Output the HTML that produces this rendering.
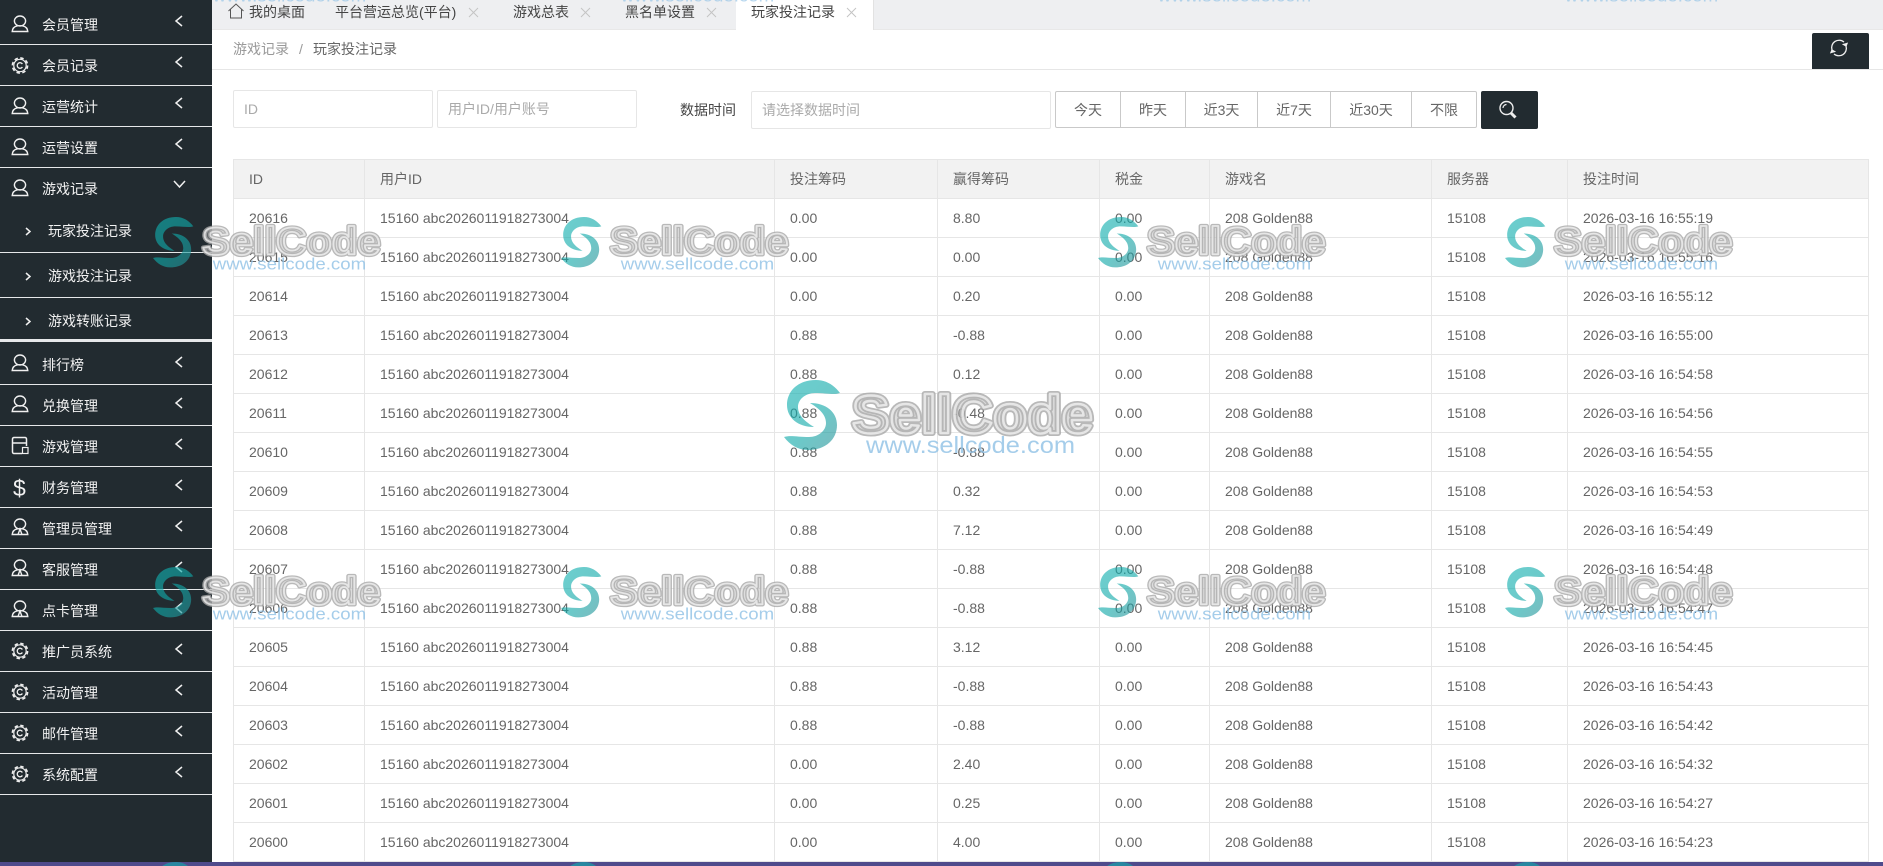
<!DOCTYPE html>
<html lang="zh">
<head>
<meta charset="utf-8">
<title>玩家投注记录</title>
<style>
html,body{margin:0;padding:0;width:1883px;height:866px;overflow:hidden;background:#fff}
body{position:relative;font:14px/20px "Liberation Sans","Noto Sans CJK SC",sans-serif;color:#666}
.a,.t{position:absolute}
.t{white-space:nowrap;line-height:20px}
#side{position:absolute;left:0;top:0;width:212px;height:862px;background:#222b30;color:#f2f2f2;overflow:hidden}
#side i{position:absolute;left:0;width:212px;height:1px;background:#e6e8e9}
#side svg{position:absolute;left:0;top:0}
#tabs{position:absolute;left:212px;top:0;width:1671px;height:29px;background:#eeeff1;border-bottom:1px solid #e8e8e8}
.box{position:absolute;box-sizing:border-box;border:1px solid #e6e6e6;border-radius:2px;color:#aaa;padding-left:10px}
.dark{position:absolute;background:#222b30;border-radius:2px}
#btns{position:absolute;left:1055px;top:91px;height:37px;width:422px;box-sizing:border-box;border:1px solid #c9c9c9;border-radius:2px}
#btns span{position:absolute;top:0;height:35px;line-height:36px;text-align:center;color:#666;border-right:1px solid #c9c9c9;box-sizing:border-box}
table{position:absolute;left:233px;top:159px;width:1636px;border-collapse:collapse;table-layout:fixed}
th,td{border:1px solid #e6e6e6;box-sizing:border-box;height:39px;padding:0 0 0 15px;text-align:left;font-weight:400;color:#666;white-space:nowrap;overflow:hidden}
th{background:#f2f2f2}
#bar{position:absolute;left:0;top:862px;width:1883px;height:4px;background:#4f4b8c}
#wm{position:absolute;left:0;top:0;pointer-events:none}
.s{fill:url(#g);opacity:.62}
.o{font:700 54px "Liberation Sans",sans-serif;fill:none;stroke:#a8a8a8;stroke-width:6;stroke-linejoin:round;opacity:.8}
.n{font:700 54px "Liberation Sans",sans-serif;fill:#b4b4b4;fill-opacity:.45;stroke:#fff;stroke-opacity:.65;stroke-width:2.400;stroke-linejoin:round}
.u{font:400 23px "Liberation Sans",sans-serif;fill:#8fc1e6;opacity:.8}
</style>
</head>
<body>

<div id="tabs"></div>
<div class="a" style="left:736px;top:0;width:138px;height:30px;background:#fff;border-right:1px solid #e2e2e2;box-sizing:border-box"></div>
<svg class="a" style="left:227px;top:3px" width="18" height="16" viewBox="0 0 18 16"><path d="M1.500 8 9 1l7.500 7M3.500 6.500V15h11V6.500" fill="none" stroke="#555" stroke-width="1"/></svg>
<div class="t" style="left:249px;top:2px;color:#444">我的桌面</div>
<div class="t" style="left:335px;top:2px;color:#444">平台营运总览(平台)</div>
<div class="t" style="left:513px;top:2px;color:#444">游戏总表</div>
<div class="t" style="left:625px;top:2px;color:#444">黑名单设置</div>
<div class="t" style="left:751px;top:2px;color:#444">玩家投注记录</div>
<svg class="a" style="left:0;top:0" width="1883" height="29" fill="none" stroke="#c4c4c4" stroke-width="1">
<path d="M469 8l9 9M478 8l-9 9M581 8l9 9M590 8l-9 9M707 8l9 9M716 8l-9 9M847 8l9 9M856 8l-9 9"/>
</svg>

<div class="t" style="left:233px;top:39px;color:#999">游戏记录</div>
<div class="t" style="left:299px;top:39px;color:#999">/</div>
<div class="t" style="left:313px;top:39px">玩家投注记录</div>
<div class="a" style="left:212px;top:69px;width:1671px;height:1px;background:#e6e6e6"></div>
<div class="dark" style="left:1812px;top:33px;width:57px;height:36px;border-radius:2px 2px 0 0"></div>
<svg class="a" style="left:1828px;top:37px" width="22" height="22" fill="none" stroke="#eee" stroke-width="1.300"><path d="M4 13A7.500 7.500 0 0 1 16 5M18 9A7.500 7.500 0 0 1 6 17"/><path d="M18 9l-2.500-1.500 3.500-1zM4 13l2.500 1.500-3.500 1z" fill="#eee"/></svg>

<div class="box" style="left:233px;top:90px;width:200px;height:38px;line-height:36px">ID</div>
<div class="box" style="left:437px;top:90px;width:200px;height:38px;line-height:36px">用户ID/用户账号</div>
<div class="t" style="left:680px;top:100px;color:#444">数据时间</div>
<div class="box" style="left:751px;top:91px;width:300px;height:38px;line-height:36px">请选择数据时间</div>
<div id="btns">
<span style="left:0;width:65px">今天</span>
<span style="left:65px;width:65px">昨天</span>
<span style="left:130px;width:72px">近3天</span>
<span style="left:202px;width:73px">近7天</span>
<span style="left:275px;width:81px">近30天</span>
<span style="left:356px;width:64px;border-right:0">不限</span>
</div>
<div class="dark" style="left:1481px;top:91px;width:57px;height:38px"></div>
<svg class="a" style="left:1498px;top:100px" width="22" height="20" fill="none" stroke="#eee"><circle cx="8.500" cy="8" r="6.500" stroke-width="1.400"/><path d="M13 13l4.500 4.500" stroke-width="3"/><path d="M8.500 4.500a3.500 3.500 0 0 0-3.500 3.500" stroke-width="1.200"/></svg>

<table>
<colgroup><col style="width:131px"><col style="width:410px"><col style="width:163px"><col style="width:162px"><col style="width:110px"><col style="width:222px"><col style="width:136px"><col></colgroup>
<tr><th>ID</th><th>用户ID</th><th>投注筹码</th><th>赢得筹码</th><th>税金</th><th>游戏名</th><th>服务器</th><th>投注时间</th></tr>
<tr><td>20616</td><td>15160 abc2026011918273004</td><td>0.00</td><td>8.80</td><td>0.00</td><td>208 Golden88</td><td>15108</td><td>2026-03-16 16:55:19</td></tr>
<tr><td>20615</td><td>15160 abc2026011918273004</td><td>0.00</td><td>0.00</td><td>0.00</td><td>208 Golden88</td><td>15108</td><td>2026-03-16 16:55:16</td></tr>
<tr><td>20614</td><td>15160 abc2026011918273004</td><td>0.00</td><td>0.20</td><td>0.00</td><td>208 Golden88</td><td>15108</td><td>2026-03-16 16:55:12</td></tr>
<tr><td>20613</td><td>15160 abc2026011918273004</td><td>0.88</td><td>-0.88</td><td>0.00</td><td>208 Golden88</td><td>15108</td><td>2026-03-16 16:55:00</td></tr>
<tr><td>20612</td><td>15160 abc2026011918273004</td><td>0.88</td><td>0.12</td><td>0.00</td><td>208 Golden88</td><td>15108</td><td>2026-03-16 16:54:58</td></tr>
<tr><td>20611</td><td>15160 abc2026011918273004</td><td>0.88</td><td>-0.48</td><td>0.00</td><td>208 Golden88</td><td>15108</td><td>2026-03-16 16:54:56</td></tr>
<tr><td>20610</td><td>15160 abc2026011918273004</td><td>0.88</td><td>-0.88</td><td>0.00</td><td>208 Golden88</td><td>15108</td><td>2026-03-16 16:54:55</td></tr>
<tr><td>20609</td><td>15160 abc2026011918273004</td><td>0.88</td><td>0.32</td><td>0.00</td><td>208 Golden88</td><td>15108</td><td>2026-03-16 16:54:53</td></tr>
<tr><td>20608</td><td>15160 abc2026011918273004</td><td>0.88</td><td>7.12</td><td>0.00</td><td>208 Golden88</td><td>15108</td><td>2026-03-16 16:54:49</td></tr>
<tr><td>20607</td><td>15160 abc2026011918273004</td><td>0.88</td><td>-0.88</td><td>0.00</td><td>208 Golden88</td><td>15108</td><td>2026-03-16 16:54:48</td></tr>
<tr><td>20606</td><td>15160 abc2026011918273004</td><td>0.88</td><td>-0.88</td><td>0.00</td><td>208 Golden88</td><td>15108</td><td>2026-03-16 16:54:47</td></tr>
<tr><td>20605</td><td>15160 abc2026011918273004</td><td>0.88</td><td>3.12</td><td>0.00</td><td>208 Golden88</td><td>15108</td><td>2026-03-16 16:54:45</td></tr>
<tr><td>20604</td><td>15160 abc2026011918273004</td><td>0.88</td><td>-0.88</td><td>0.00</td><td>208 Golden88</td><td>15108</td><td>2026-03-16 16:54:43</td></tr>
<tr><td>20603</td><td>15160 abc2026011918273004</td><td>0.88</td><td>-0.88</td><td>0.00</td><td>208 Golden88</td><td>15108</td><td>2026-03-16 16:54:42</td></tr>
<tr><td>20602</td><td>15160 abc2026011918273004</td><td>0.00</td><td>2.40</td><td>0.00</td><td>208 Golden88</td><td>15108</td><td>2026-03-16 16:54:32</td></tr>
<tr><td>20601</td><td>15160 abc2026011918273004</td><td>0.00</td><td>0.25</td><td>0.00</td><td>208 Golden88</td><td>15108</td><td>2026-03-16 16:54:27</td></tr>
<tr><td>20600</td><td>15160 abc2026011918273004</td><td>0.00</td><td>4.00</td><td>0.00</td><td>208 Golden88</td><td>15108</td><td>2026-03-16 16:54:23</td></tr>
</table>

<div id="side">
<i style="top:44px"></i><i style="top:85px"></i><i style="top:126px"></i><i style="top:167px"></i><i style="top:252px"></i><i style="top:297px"></i><i style="top:339px;height:3px"></i><i style="top:384px"></i><i style="top:425px"></i><i style="top:466px"></i><i style="top:507px"></i><i style="top:548px"></i><i style="top:589px"></i><i style="top:630px"></i><i style="top:671px"></i><i style="top:712px"></i><i style="top:753px"></i><i style="top:794px"></i>

<div class="t" style="left:42px;top:15px">会员管理</div>
<div class="t" style="left:42px;top:56px">会员记录</div>
<div class="t" style="left:42px;top:97px">运营统计</div>
<div class="t" style="left:42px;top:138px">运营设置</div>
<div class="t" style="left:42px;top:179px">游戏记录</div>
<div class="t" style="left:48px;top:221px">玩家投注记录</div>
<div class="t" style="left:48px;top:266px">游戏投注记录</div>
<div class="t" style="left:48px;top:311px">游戏转账记录</div>
<div class="t" style="left:42px;top:355px">排行榜</div>
<div class="t" style="left:42px;top:396px">兑换管理</div>
<div class="t" style="left:42px;top:437px">游戏管理</div>
<div class="t" style="left:42px;top:478px">财务管理</div>
<div class="t" style="left:42px;top:519px">管理员管理</div>
<div class="t" style="left:42px;top:560px">客服管理</div>
<div class="t" style="left:42px;top:601px">点卡管理</div>
<div class="t" style="left:42px;top:642px">推广员系统</div>
<div class="t" style="left:42px;top:683px">活动管理</div>
<div class="t" style="left:42px;top:724px">邮件管理</div>
<div class="t" style="left:42px;top:765px">系统配置</div>
<div class="t" style="left:13px;top:476px;font-size:23px;line-height:24px;color:#f2f2f2">$</div>

<svg width="212" height="862" fill="none" stroke="#f0f0f0" stroke-width="1.500">
<!-- chevrons -->
<path d="M182 16l-6 5 6 5M182 57l-6 5 6 5M182 98l-6 5 6 5M182 139l-6 5 6 5M182 357l-6 5 6 5M182 398l-6 5 6 5M182 439l-6 5 6 5M182 480l-6 5 6 5M182 521l-6 5 6 5M182 562l-6 5 6 5M182 603l-6 5 6 5M182 644l-6 5 6 5M182 685l-6 5 6 5M182 726l-6 5 6 5M182 767l-6 5 6 5"/>
<path d="M174 181l5.500 6 5.500-6"/>
<path d="M26 228l4 3.500-4 3.500M26 273l4 3.500-4 3.500M26 318l4 3.500-4 3.500"/>
<!-- person icons -->
<g stroke-width="1.400">
<g><ellipse cx="20" cy="21" rx="5.600" ry="5"/><path d="M12.200 31.500c.2-3.500 2-5 5.300-5.700h5c3.300.7 5.100 2.200 5.300 5.700z"/></g>
<g transform="translate(0,82)"><ellipse cx="20" cy="21" rx="5.600" ry="5"/><path d="M12.200 31.500c.2-3.500 2-5 5.300-5.700h5c3.300.7 5.100 2.200 5.300 5.700z"/></g>
<g transform="translate(0,123)"><ellipse cx="20" cy="21" rx="5.600" ry="5"/><path d="M12.200 31.500c.2-3.500 2-5 5.300-5.700h5c3.300.7 5.100 2.200 5.300 5.700z"/></g>
<g transform="translate(0,164)"><ellipse cx="20" cy="21" rx="5.600" ry="5"/><path d="M12.200 31.500c.2-3.500 2-5 5.300-5.700h5c3.300.7 5.100 2.200 5.300 5.700z"/></g>
<g transform="translate(0,339)"><ellipse cx="20" cy="21" rx="5.600" ry="5"/><path d="M12.200 31.500c.2-3.500 2-5 5.300-5.700h5c3.300.7 5.100 2.200 5.300 5.700z"/></g>
<g transform="translate(0,380)"><ellipse cx="20" cy="21" rx="5.600" ry="5"/><path d="M12.200 31.500c.2-3.500 2-5 5.300-5.700h5c3.300.7 5.100 2.200 5.300 5.700z"/></g>
<!-- person with tie -->
<g transform="translate(0,503)"><ellipse cx="20" cy="21" rx="5.600" ry="5"/><path d="M12.200 31.500c.2-3.500 2-5 5.300-5.700h5c3.300.7 5.100 2.200 5.300 5.700zM20 26l-2 5.500h4z"/></g>
<g transform="translate(0,544)"><ellipse cx="20" cy="21" rx="5.600" ry="5"/><path d="M12.200 31.500c.2-3.500 2-5 5.300-5.700h5c3.300.7 5.100 2.200 5.300 5.700zM20 26l-2 5.500h4z"/></g>
<g transform="translate(0,585)"><ellipse cx="20" cy="21" rx="5.600" ry="5"/><path d="M12.200 31.500c.2-3.500 2-5 5.300-5.700h5c3.300.7 5.100 2.200 5.300 5.700zM20 26l-2 5.500h4z"/></g>
</g>
<!-- gears -->
<g transform="translate(20,65.500)"><circle r="6.200" stroke-width="1.200"/><circle r="7.600" stroke-width="1.600" stroke-dasharray="3.500 2.470"/><path d="M2.400-1.500A2.800 2.800 0 1 0 2.400 1.500" stroke-width="1.300"/></g>
<g transform="translate(20,651)"><circle r="6.200" stroke-width="1.200"/><circle r="7.600" stroke-width="1.600" stroke-dasharray="3.500 2.470"/><path d="M2.400-1.500A2.800 2.800 0 1 0 2.400 1.500" stroke-width="1.300"/></g>
<g transform="translate(20,692)"><circle r="6.200" stroke-width="1.200"/><circle r="7.600" stroke-width="1.600" stroke-dasharray="3.500 2.470"/><path d="M2.400-1.500A2.800 2.800 0 1 0 2.400 1.500" stroke-width="1.300"/></g>
<g transform="translate(20,733)"><circle r="6.200" stroke-width="1.200"/><circle r="7.600" stroke-width="1.600" stroke-dasharray="3.500 2.470"/><path d="M2.400-1.500A2.800 2.800 0 1 0 2.400 1.500" stroke-width="1.300"/></g>
<g transform="translate(20,774)"><circle r="6.200" stroke-width="1.200"/><circle r="7.600" stroke-width="1.600" stroke-dasharray="3.500 2.470"/><path d="M2.400-1.500A2.800 2.800 0 1 0 2.400 1.500" stroke-width="1.300"/></g>
<!-- game icon -->
<path d="M22 453.500H14a1.500 1.500 0 0 1-1.500-1.500V439a1.500 1.500 0 0 1 1.500-1.500H25a1.500 1.500 0 0 1 1.500 1.500v7M12.500 443h14"/>
<rect x="22.500" y="447.500" width="5.500" height="6" stroke-width="1.200"/>
</svg>
</div>

<div id="bar"></div>

<svg id="wm" width="1883" height="866" viewBox="0 0 1883 866">
<defs>
<linearGradient id="g" x1="0" y1="0" x2="1" y2="1"><stop offset="0" stop-color="#10b2b2"/><stop offset=".55" stop-color="#10a8a8"/><stop offset="1" stop-color="#2b8f96"/></linearGradient>
</defs>

<!-- large centre -->
<g transform="translate(784,380)">
<path class="s" d="M56 13C50 5 42 0 32 0 14 0 3 11 3 25 3 38 14 47 30 47 22 42 14 36 14 27 14 19 22 13 31 13 42 13 50 15 56 13zM0 57C6 65 14 70 24 70 42 70 53 59 53 45 53 32 42 23 26 23 34 28 42 34 42 43 42 51 34 57 25 57 14 57 6 55 0 57z"/>
<text class="o" x="68" y="53" textLength="241" lengthAdjust="spacingAndGlyphs">SellCode</text>
<text class="n" x="68" y="53" textLength="241" lengthAdjust="spacingAndGlyphs">SellCode</text>
<text class="u" x="82" y="73" textLength="209" lengthAdjust="spacingAndGlyphs">www.sellcode.com</text>
</g>

<!-- small row 1 -->
<g transform="translate(153,217) scale(.72)"><path class="s" d="M56 13C50 5 42 0 32 0 14 0 3 11 3 25 3 38 14 47 30 47 22 42 14 36 14 27 14 19 22 13 31 13 42 13 50 15 56 13zM0 57C6 65 14 70 24 70 42 70 53 59 53 45 53 32 42 23 26 23 34 28 42 34 42 43 42 51 34 57 25 57 14 57 6 55 0 57z"/><text class="o" x="68" y="52" textLength="248" lengthAdjust="spacingAndGlyphs">SellCode</text><text class="n" x="68" y="52" textLength="248" lengthAdjust="spacingAndGlyphs">SellCode</text><text class="u" x="83" y="73" textLength="213" lengthAdjust="spacingAndGlyphs">www.sellcode.com</text></g>
<g transform="translate(561,217) scale(.72)"><path class="s" d="M56 13C50 5 42 0 32 0 14 0 3 11 3 25 3 38 14 47 30 47 22 42 14 36 14 27 14 19 22 13 31 13 42 13 50 15 56 13zM0 57C6 65 14 70 24 70 42 70 53 59 53 45 53 32 42 23 26 23 34 28 42 34 42 43 42 51 34 57 25 57 14 57 6 55 0 57z"/><text class="o" x="68" y="52" textLength="248" lengthAdjust="spacingAndGlyphs">SellCode</text><text class="n" x="68" y="52" textLength="248" lengthAdjust="spacingAndGlyphs">SellCode</text><text class="u" x="83" y="73" textLength="213" lengthAdjust="spacingAndGlyphs">www.sellcode.com</text></g>
<g transform="translate(1098,217) scale(.72)"><path class="s" d="M56 13C50 5 42 0 32 0 14 0 3 11 3 25 3 38 14 47 30 47 22 42 14 36 14 27 14 19 22 13 31 13 42 13 50 15 56 13zM0 57C6 65 14 70 24 70 42 70 53 59 53 45 53 32 42 23 26 23 34 28 42 34 42 43 42 51 34 57 25 57 14 57 6 55 0 57z"/><text class="o" x="68" y="52" textLength="248" lengthAdjust="spacingAndGlyphs">SellCode</text><text class="n" x="68" y="52" textLength="248" lengthAdjust="spacingAndGlyphs">SellCode</text><text class="u" x="83" y="73" textLength="213" lengthAdjust="spacingAndGlyphs">www.sellcode.com</text></g>
<g transform="translate(1505,217) scale(.72)"><path class="s" d="M56 13C50 5 42 0 32 0 14 0 3 11 3 25 3 38 14 47 30 47 22 42 14 36 14 27 14 19 22 13 31 13 42 13 50 15 56 13zM0 57C6 65 14 70 24 70 42 70 53 59 53 45 53 32 42 23 26 23 34 28 42 34 42 43 42 51 34 57 25 57 14 57 6 55 0 57z"/><text class="o" x="68" y="52" textLength="248" lengthAdjust="spacingAndGlyphs">SellCode</text><text class="n" x="68" y="52" textLength="248" lengthAdjust="spacingAndGlyphs">SellCode</text><text class="u" x="83" y="73" textLength="213" lengthAdjust="spacingAndGlyphs">www.sellcode.com</text></g>

<!-- small row 2 -->
<g transform="translate(153,567) scale(.72)"><path class="s" d="M56 13C50 5 42 0 32 0 14 0 3 11 3 25 3 38 14 47 30 47 22 42 14 36 14 27 14 19 22 13 31 13 42 13 50 15 56 13zM0 57C6 65 14 70 24 70 42 70 53 59 53 45 53 32 42 23 26 23 34 28 42 34 42 43 42 51 34 57 25 57 14 57 6 55 0 57z"/><text class="o" x="68" y="52" textLength="248" lengthAdjust="spacingAndGlyphs">SellCode</text><text class="n" x="68" y="52" textLength="248" lengthAdjust="spacingAndGlyphs">SellCode</text><text class="u" x="83" y="73" textLength="213" lengthAdjust="spacingAndGlyphs">www.sellcode.com</text></g>
<g transform="translate(561,567) scale(.72)"><path class="s" d="M56 13C50 5 42 0 32 0 14 0 3 11 3 25 3 38 14 47 30 47 22 42 14 36 14 27 14 19 22 13 31 13 42 13 50 15 56 13zM0 57C6 65 14 70 24 70 42 70 53 59 53 45 53 32 42 23 26 23 34 28 42 34 42 43 42 51 34 57 25 57 14 57 6 55 0 57z"/><text class="o" x="68" y="52" textLength="248" lengthAdjust="spacingAndGlyphs">SellCode</text><text class="n" x="68" y="52" textLength="248" lengthAdjust="spacingAndGlyphs">SellCode</text><text class="u" x="83" y="73" textLength="213" lengthAdjust="spacingAndGlyphs">www.sellcode.com</text></g>
<g transform="translate(1098,567) scale(.72)"><path class="s" d="M56 13C50 5 42 0 32 0 14 0 3 11 3 25 3 38 14 47 30 47 22 42 14 36 14 27 14 19 22 13 31 13 42 13 50 15 56 13zM0 57C6 65 14 70 24 70 42 70 53 59 53 45 53 32 42 23 26 23 34 28 42 34 42 43 42 51 34 57 25 57 14 57 6 55 0 57z"/><text class="o" x="68" y="52" textLength="248" lengthAdjust="spacingAndGlyphs">SellCode</text><text class="n" x="68" y="52" textLength="248" lengthAdjust="spacingAndGlyphs">SellCode</text><text class="u" x="83" y="73" textLength="213" lengthAdjust="spacingAndGlyphs">www.sellcode.com</text></g>
<g transform="translate(1505,567) scale(.72)"><path class="s" d="M56 13C50 5 42 0 32 0 14 0 3 11 3 25 3 38 14 47 30 47 22 42 14 36 14 27 14 19 22 13 31 13 42 13 50 15 56 13zM0 57C6 65 14 70 24 70 42 70 53 59 53 45 53 32 42 23 26 23 34 28 42 34 42 43 42 51 34 57 25 57 14 57 6 55 0 57z"/><text class="o" x="68" y="52" textLength="248" lengthAdjust="spacingAndGlyphs">SellCode</text><text class="n" x="68" y="52" textLength="248" lengthAdjust="spacingAndGlyphs">SellCode</text><text class="u" x="83" y="73" textLength="213" lengthAdjust="spacingAndGlyphs">www.sellcode.com</text></g>

<!-- top partial -->
<g transform="translate(153,-51) scale(.72)" opacity=".8"><text class="u" x="83" y="73" textLength="213" lengthAdjust="spacingAndGlyphs">www.sellcode.com</text></g>
<g transform="translate(561,-51) scale(.72)" opacity=".8"><text class="u" x="83" y="73" textLength="213" lengthAdjust="spacingAndGlyphs">www.sellcode.com</text></g>
<g transform="translate(1098,-51) scale(.72)" opacity=".8"><text class="u" x="83" y="73" textLength="213" lengthAdjust="spacingAndGlyphs">www.sellcode.com</text></g>
<g transform="translate(1505,-51) scale(.72)" opacity=".8"><text class="u" x="83" y="73" textLength="213" lengthAdjust="spacingAndGlyphs">www.sellcode.com</text></g>

<!-- bottom partial -->
<g transform="translate(153,862) scale(.72)"><path class="s" d="M56 13C50 5 42 0 32 0 14 0 3 11 3 25 3 38 14 47 30 47 22 42 14 36 14 27 14 19 22 13 31 13 42 13 50 15 56 13z"/></g>
<g transform="translate(561,862) scale(.72)"><path class="s" d="M56 13C50 5 42 0 32 0 14 0 3 11 3 25 3 38 14 47 30 47 22 42 14 36 14 27 14 19 22 13 31 13 42 13 50 15 56 13z"/></g>
<g transform="translate(1098,862) scale(.72)"><path class="s" d="M56 13C50 5 42 0 32 0 14 0 3 11 3 25 3 38 14 47 30 47 22 42 14 36 14 27 14 19 22 13 31 13 42 13 50 15 56 13z"/></g>
<g transform="translate(1505,862) scale(.72)"><path class="s" d="M56 13C50 5 42 0 32 0 14 0 3 11 3 25 3 38 14 47 30 47 22 42 14 36 14 27 14 19 22 13 31 13 42 13 50 15 56 13z"/></g>
</svg>

</body>
</html>
